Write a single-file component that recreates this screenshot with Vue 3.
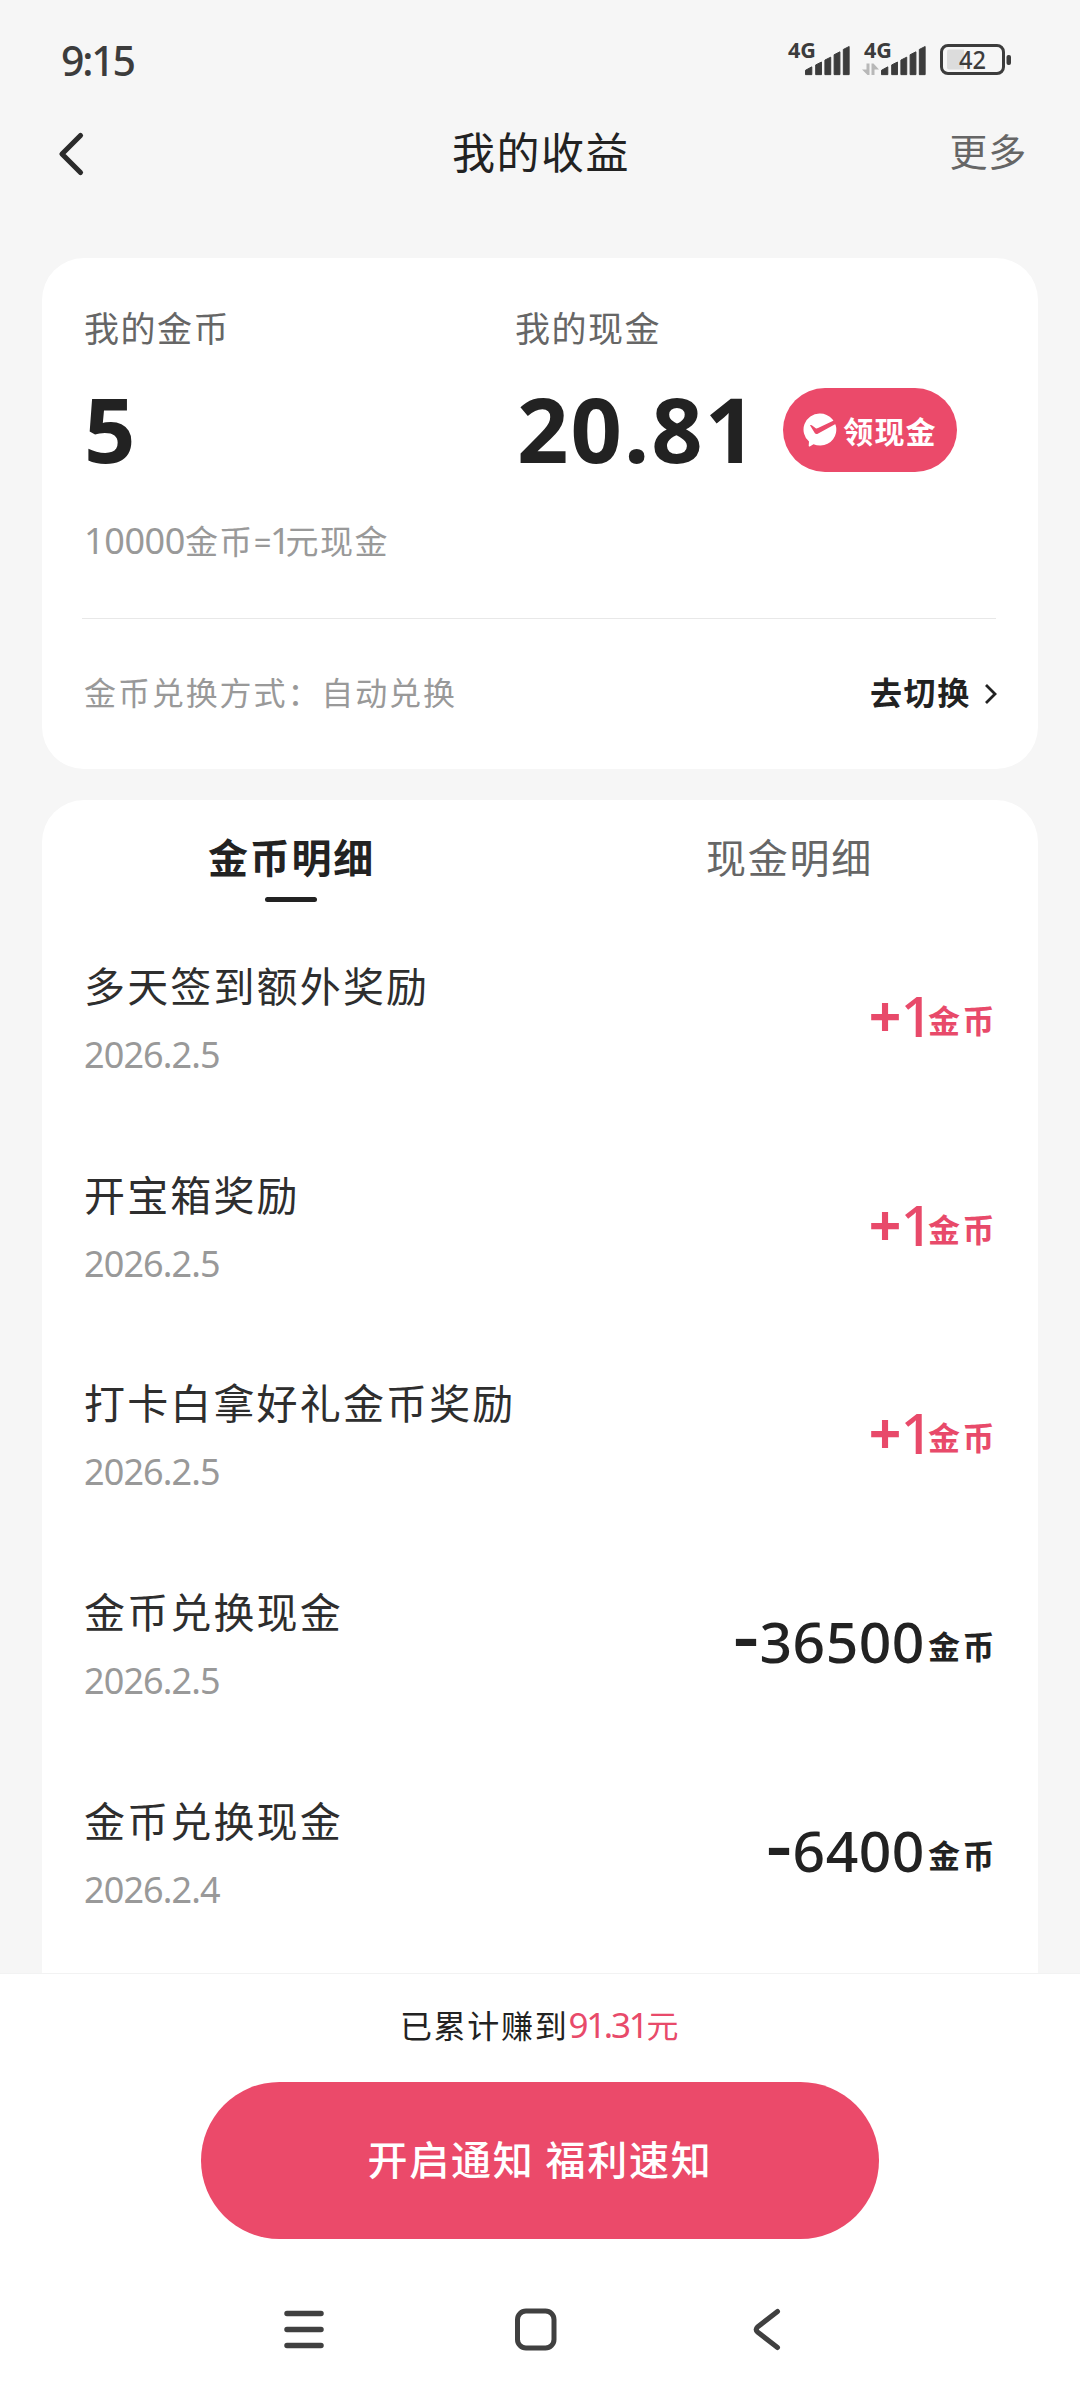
<script setup>
const records = [
  { title: '多天签到额外奖励', date: '2026.2.5', sign: '+', value: '1' },
  { title: '开宝箱奖励', date: '2026.2.5', sign: '+', value: '1' },
  { title: '打卡白拿好礼金币奖励', date: '2026.2.5', sign: '+', value: '1' },
  { title: '金币兑换现金', date: '2026.2.5', sign: '-', value: '36500' },
  { title: '金币兑换现金', date: '2026.2.4', sign: '-', value: '6400' },
]
const bars = [
  'M0 24.5L6.5 21V29H0Z',
  'M10.5 19L16.5 16V29H10.5Z',
  'M20 14L26 11V29H20Z',
  'M29.5 8.5L35.5 5.5V29H29.5Z',
  'M39 3L45 0V29H39Z',
]
</script>

<template>
  <div class="page">
    <div class="status">
      <span class="time">9:15</span>
      <svg class="indicators" width="226" height="60" viewBox="786 25 226 60">
        <g fill="#3c3c3c" stroke="#3c3c3c" stroke-width="1" stroke-linejoin="round">
          <g transform="translate(805.5 46.5)"><path v-for="b in bars" :key="b" :d="b" transform="scale(.97)" /></g>
          <g transform="translate(881.5 46.5)"><path v-for="b in bars" :key="b" :d="b" transform="scale(.97)" /></g>
        </g>
        <g class="net">
          <text x="788" y="57.500" textLength="28" lengthAdjust="spacingAndGlyphs">4G</text>
          <text x="864" y="57.500" textLength="28" lengthAdjust="spacingAndGlyphs">4G</text>
        </g>
        <path d="M866.500 63.500H869.500V75H867.500L862 69.500H866.500ZM871.500 75V63.500H873.500L879 69.500H874.500V75Z" fill="#b8b8b8" />
        <rect x="941.500" y="45.500" width="62" height="28" rx="6.500" fill="none" stroke="#3c3c3c" stroke-width="3" />
        <path d="M949 49.500H964V69.500H949Q947 69.500 947 67.500V51.500Q947 49.500 949 49.500Z" fill="#dcdcdc" />
        <rect x="1006.500" y="55" width="4.500" height="10" rx="2" fill="#3c3c3c" />
        <text class="level" x="959" y="68.500" textLength="27" lengthAdjust="spacingAndGlyphs">42</text>
      </svg>
    </div>

    <header class="header">
      <svg class="back" width="30" height="48" viewBox="0 0 30 48">
        <path d="M25.500 5.500L7 24L25.500 42.500" fill="none" stroke="#2b2b2b" stroke-width="5.200" stroke-linecap="round" stroke-linejoin="round" />
      </svg>
      <h1>我的收益</h1>
      <span class="more">更多</span>
    </header>

    <section class="card wallet">
      <div class="balances">
        <div class="coins">
          <div class="label">我的金币</div>
          <div class="amount">5</div>
        </div>
        <div class="cash">
          <div class="label">我的现金</div>
          <div class="cash-line">
            <span class="amount">20.81</span>
            <button class="withdraw">
              <svg width="34" height="34" viewBox="0 0 34 34">
                <path d="M16.500.600A16.200 16 0 1 1 10.500 31.200L6.800 33.400Q5.600 33.800 5.700 32.500L6 28.600A16.200 16 0 0 1 16.500.600Z" fill="#fff" />
                <path d="M7 12.200Q8.200 11.700 9.800 13L12.700 15.300Q13.500 15.800 15 15.100L30.800 7.500L33.400 10.600L15.200 20.500Q13 21.600 11.900 20.300Z" fill="#eb4a6a" />
              </svg>
              <span>领现金</span>
            </button>
          </div>
        </div>
      </div>
      <div class="rate"><span class="num">10000</span>金币<span class="eq">=</span><span class="num one">1</span>元现金</div>
      <div class="divider"></div>
      <div class="exchange">
        <span class="mode">金币兑换方式：自动兑换</span>
        <span class="switch">去切换
          <svg width="13" height="22" viewBox="0 0 13 22">
            <path d="M2 2L11 11L2 20" fill="none" stroke="#222" stroke-width="2.800" />
          </svg>
        </span>
      </div>
    </section>

    <section class="card detail">
      <nav class="tabs">
        <div class="tab active">金币明细</div>
        <div class="tab">现金明细</div>
      </nav>
      <div v-for="(r, i) in records" :key="i" class="record">
        <div>
          <div class="title">{{ r.title }}</div>
          <div class="date">{{ r.date }}</div>
        </div>
        <div class="change" :class="r.sign === '+' ? 'gain' : 'spend'"><span class="sign">{{ r.sign }}</span><span class="value">{{ r.value }}</span><span class="unit">金币</span></div>
      </div>
    </section>

    <footer class="footer">
      <div class="total">已累计赚到<span class="pink"><span class="sum">91.31</span>元</span></div>
      <button class="notify">开启通知 福利速知</button>
      <div class="sysnav">
        <svg width="48" height="48" viewBox="0 0 48 48">
          <path d="M7 8.500H41M7 24.500H41M7 40.500H41" stroke="#404040" stroke-width="5.500" stroke-linecap="round" />
        </svg>
        <svg width="48" height="48" viewBox="0 0 48 48">
          <rect x="5.500" y="6" width="36.500" height="37" rx="8.500" fill="none" stroke="#404040" stroke-width="5" />
        </svg>
        <svg width="48" height="48" viewBox="0 0 48 48">
          <path d="M34.500 6.500L14.500 22Q12 24.500 14.500 27L34.500 42.500" fill="none" stroke="#404040" stroke-width="5" stroke-linecap="round" stroke-linejoin="round" />
        </svg>
      </div>
    </footer>
  </div>
</template>

<style>
body {
  background: #f6f6f6;
}
</style>

<style scoped>
.page {
  width: 1080px;
  height: 2400px;
  display: flex;
  flex-direction: column;
  background: #f6f6f6;
  color: #222;
  font-family: "Noto Sans CJK SC", sans-serif;
  overflow: hidden;
}
button {
  border: 0;
  padding: 0;
  font-family: inherit;
  background: #eb4a6a;
  color: #fff;
}
svg {
  display: block;
  flex: none;
}
.status {
  height: 100px;
  display: flex;
  justify-content: space-between;
  align-items: flex-start;
  padding: 25px 68px 0 61px;
  box-sizing: border-box;
}
.time {
  margin-top: 15px;
  font: 500 41px/40px "Noto Sans", sans-serif;
  letter-spacing: -2.200px;
  color: #3c3c3c;
}
.net {
  font: 700 22px "Noto Sans", sans-serif;
  fill: #3c3c3c;
}
.level {
  font: 500 25px "Noto Sans", sans-serif;
  fill: #3c3c3c;
}
.header {
  height: 158px;
  display: grid;
  grid-template-columns: 1fr auto 1fr;
  align-items: start;
  padding: 0 53px 0 55px;
  box-sizing: border-box;
}
.back {
  margin-top: 30px;
}
h1 {
  margin: 0;
  font-size: 43px;
  font-weight: 400;
  line-height: 100px;
  letter-spacing: 1.500px;
}
.more {
  justify-self: end;
  font-size: 38px;
  line-height: 99px;
  letter-spacing: 0.800px;
  color: #666;
}
.card {
  margin: 0 42px;
  padding: 0 42px;
  background: #fff;
  border-radius: 42px;
}
.wallet {
  height: 511px;
  box-sizing: border-box;
  padding-top: 44px;
}
.balances {
  display: flex;
}
.coins {
  width: 431px;
}
.label {
  font-size: 35px;
  line-height: 50px;
  letter-spacing: 1.500px;
  color: #666;
}
.amount {
  font: 700 90px/100px "Noto Sans", sans-serif;
}
.coins .amount,
.cash-line {
  margin-top: 26px;
}
.cash-line {
  display: flex;
  height: 100px;
  align-items: center;
}
.cash-line .amount {
  width: 266px;
  padding-left: 2px;
  letter-spacing: 2px;
}
.withdraw {
  display: flex;
  align-items: center;
  justify-content: center;
  gap: 6px;
  width: 174px;
  height: 84px;
  margin-top: 4px;
  border-radius: 42px;
  font-size: 30px;
  font-weight: 700;
  letter-spacing: 1.200px;
}
.withdraw span {
  line-height: 40px;
}
.rate {
  margin-top: 37px;
  font-size: 33px;
  line-height: 50px;
  letter-spacing: 1.400px;
  color: #999;
}
.rate .num {
  font: 400 36px "Noto Sans", sans-serif;
  letter-spacing: -0.400px;
}
.rate .eq {
  font: 400 31px "Noto Sans", sans-serif;
  letter-spacing: -1.500px;
}
.rate .one {
  letter-spacing: -5px;
}
.divider {
  height: 1px;
  margin: 53px 0 0 -2px;
  background: #e8e8e8;
}
.exchange {
  height: 144px;
  display: flex;
  align-items: center;
  justify-content: space-between;
}
.mode {
  font-size: 32px;
  letter-spacing: 1.900px;
  color: #999;
}
.switch {
  display: flex;
  align-items: center;
  gap: 13px;
  margin-right: -1px;
  font-size: 32px;
  font-weight: 700;
  letter-spacing: 1.700px;
}
.switch svg {
  margin-top: 5px;
}
.detail {
  flex: 1;
  min-height: 0;
  margin-top: 31px;
  border-radius: 42px 42px 0 0;
  overflow: hidden;
}
.tabs {
  display: flex;
  margin: 0 -42px;
  height: 113px;
}
.tab {
  flex: 1;
  display: flex;
  flex-direction: column;
  align-items: center;
  font-size: 40px;
  line-height: 112px;
  letter-spacing: 1.700px;
  text-indent: 1px;
  color: #666;
}
.active {
  font-weight: 700;
  color: #222;
}
.active::after {
  content: "";
  width: 52px;
  height: 5px;
  margin-top: -15px;
  border-radius: 3px;
  background: #222;
}
.record {
  height: 208.750px;
  display: flex;
  align-items: center;
  justify-content: space-between;
}
.title {
  font-size: 41px;
  line-height: 52px;
  letter-spacing: 2.150px;
  color: #2e2e2e;
}
.date {
  margin-top: 23px;
  font: 400 36px/44px "Noto Sans", sans-serif;
  letter-spacing: -0.900px;
  color: #999;
}
.change {
  margin: 0 -1px 5px 0;
  font: 500 57px/60px "Noto Sans", sans-serif;
  white-space: nowrap;
}
.gain,
.pink {
  color: #e84a6a;
}
.sign {
  font-weight: 700;
}
.spend .sign {
  display: inline-block;
  line-height: 40px;
  margin-right: 4px;
  vertical-align: 5px;
  transform: scaleX(1.350);
}
.value {
  letter-spacing: 0.500px;
}
.gain .sign {
  letter-spacing: -1px;
}
.gain .value {
  letter-spacing: -5px;
}
.unit {
  font: 700 32px/40px "Noto Sans CJK SC", sans-serif;
  letter-spacing: 2.500px;
  vertical-align: 4px;
  margin-left: 3px;
}
.gain .unit {
  margin-left: 0;
}
.footer {
  height: 427px;
  box-sizing: border-box;
  border-top: 1px solid #f2f2f2;
  background: #fff;
  display: flex;
  flex-direction: column;
  align-items: center;
  padding-top: 26px;
}
.total {
  font-size: 32px;
  line-height: 48px;
  letter-spacing: 1.700px;
}
.sum {
  font: 400 35px "Noto Sans", sans-serif;
  letter-spacing: -2.300px;
}
.notify {
  width: 678px;
  height: 157px;
  flex: none;
  margin-top: 34px;
  padding-bottom: 6px;
  border-radius: 79px;
  font-size: 40px;
  font-weight: 500;
  letter-spacing: 1.800px;
}
.sysnav {
  display: flex;
  gap: 183.500px;
  padding-right: 9px;
  margin-top: 66px;
}
</style>
